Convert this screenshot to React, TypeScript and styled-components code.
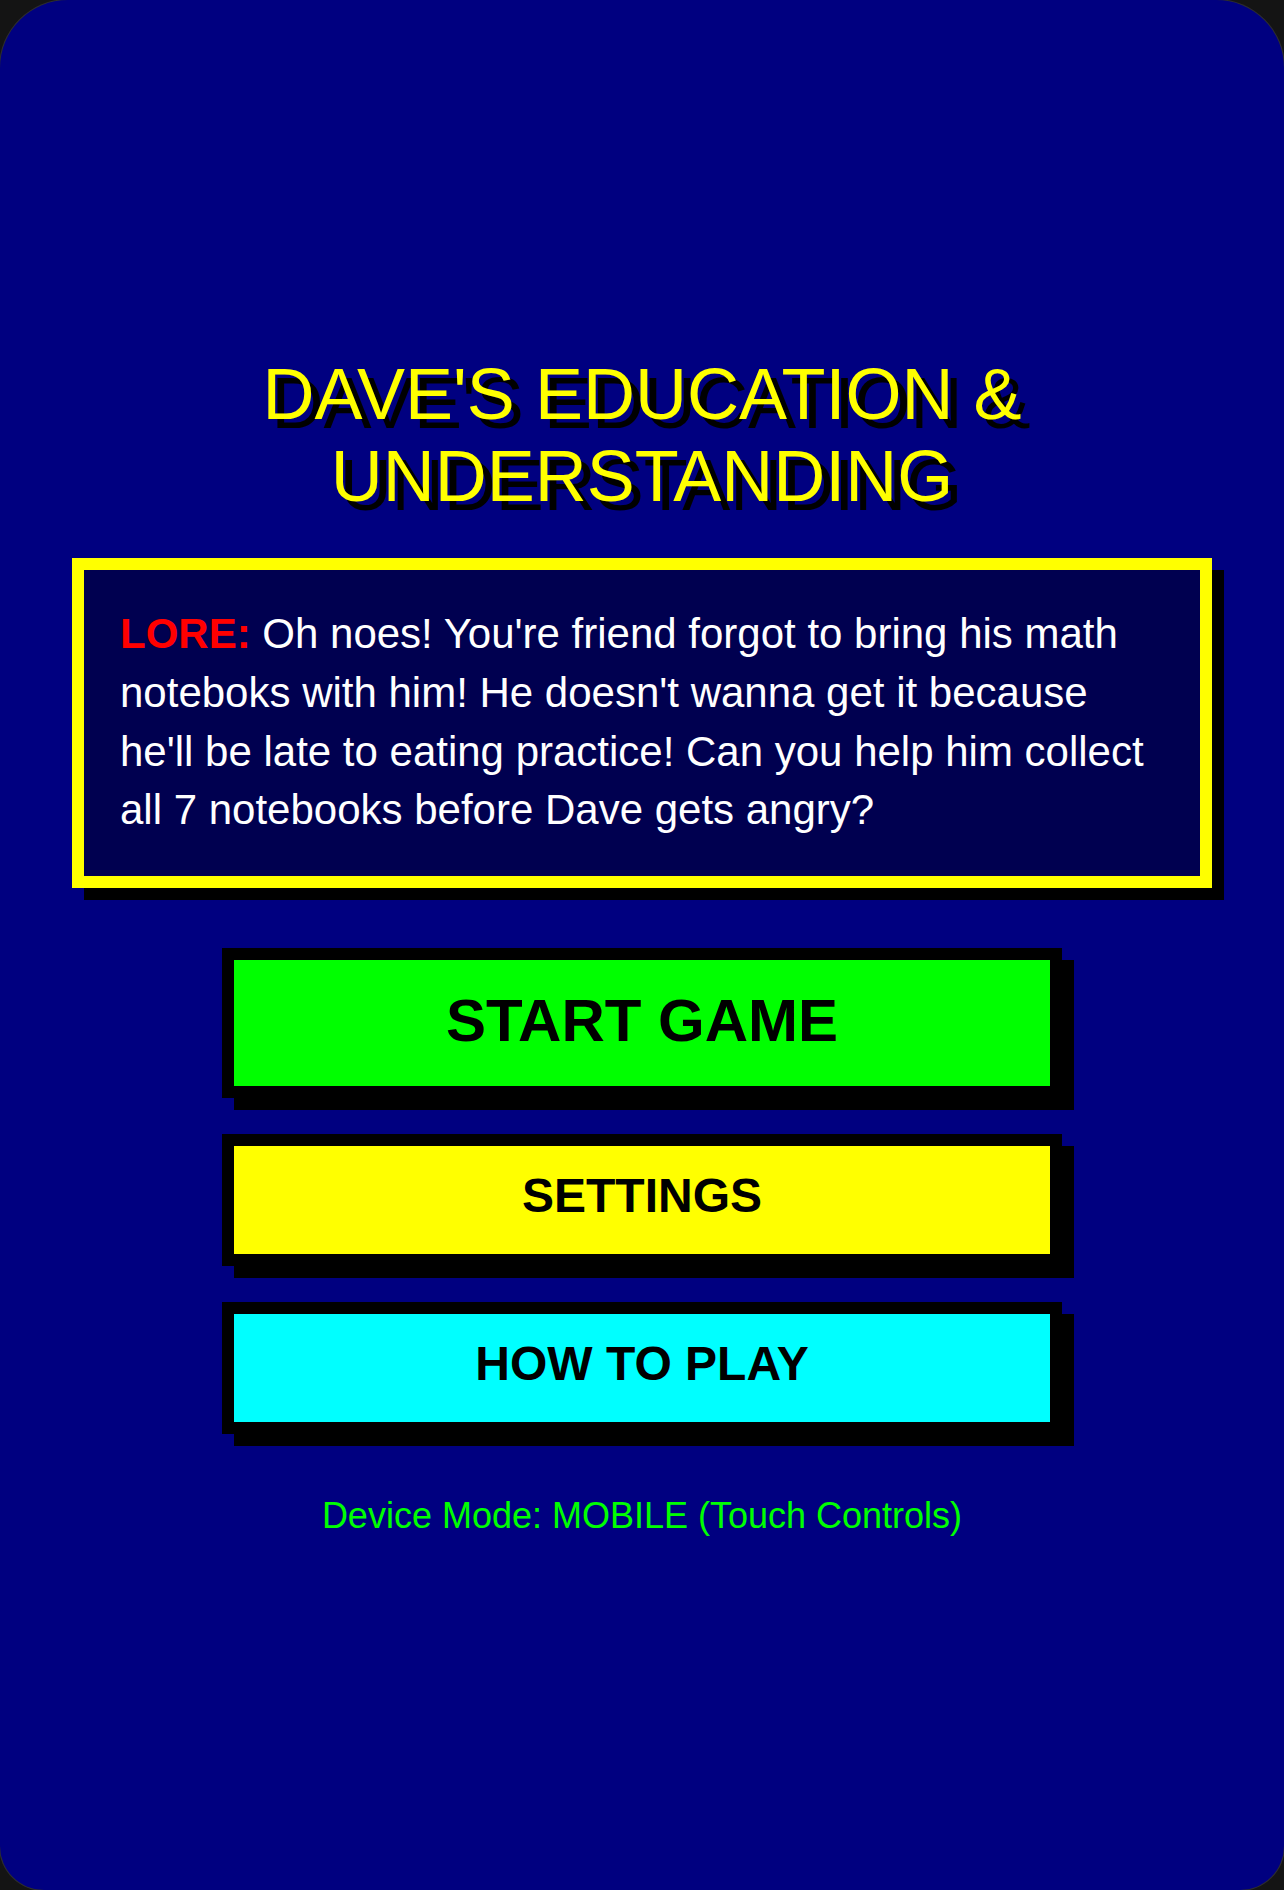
import { FC } from "react";
import styled, { createGlobalStyle } from "styled-components";

const GlobalStyle = createGlobalStyle`
	html, body {
		margin: 0;
		padding: 0;
		background: #141414;
	}

	* {
		box-sizing: border-box;
	}
`;

const Screen = styled("div")`
	display: flex;
	flex-direction: column;
	align-items: center;
	width: 1284px;
	min-height: 100vh;
	padding: 353px 72px 0;
	background: #000080;
	border-radius: 68px 68px 44px 44px;
	box-shadow: 0 0 0 1px #2e2e2e;
	font-family: "Liberation Sans", Arial, sans-serif;
`;

const Title = styled("h1")`
	margin: 0 0 41px;
	width: 100%;
	font-size: 72px;
	font-weight: 400;
	line-height: normal;
	text-align: center;
	color: #ffff00;
	text-shadow: 9px 9px 0 #000;
`;

const LoreBox = styled("div")`
	width: 100%;
	padding: 35px 36px 36px;
	background: #000050;
	border: 12px solid #ffff00;
	box-shadow: 12px 12px 0 #000;
	color: #fff;
	font-size: 42px;
	line-height: 1.4;
`;

const LoreLabel = styled("span")`
	color: #ff0000;
	font-weight: 700;
`;

const ButtonStack = styled("div")`
	display: flex;
	flex-direction: column;
	gap: 36px;
	width: 840px;
	margin-top: 60px;
`;

type ButtonKind = "primary" | "secondary";

const MenuButton = styled("button")<{ $bg: string; $kind: ButtonKind }>`
	display: block;
	width: 100%;
	margin: 0;
	padding: ${({ $kind }) => ($kind === "primary" ? "31px 0 35px" : "26px 0 34px")};
	background: ${({ $bg }) => $bg};
	border: 12px solid #000;
	border-radius: 0;
	box-shadow: 12px 12px 0 #000;
	color: #000;
	font-family: "Liberation Sans", Arial, sans-serif;
	font-size: ${({ $kind }) => ($kind === "primary" ? "60px" : "48px")};
	font-weight: 700;
	line-height: 1;
	text-align: center;
	cursor: pointer;
`;

const DeviceMode = styled("p")`
	margin: 61px 0 0;
	color: #00ff00;
	font-size: 36px;
	line-height: normal;
	text-align: center;
`;

const menu: { label: string; bg: string; kind: ButtonKind }[] = [
	{ label: "START GAME", bg: "#00ff00", kind: "primary" },
	{ label: "SETTINGS", bg: "#ffff00", kind: "secondary" },
	{ label: "HOW TO PLAY", bg: "#00ffff", kind: "secondary" },
];

const App: FC = () => {
	return (
		<>
			<GlobalStyle />
			<Screen>
				<Title>DAVE'S EDUCATION &amp; UNDERSTANDING</Title>
				<LoreBox>
					<LoreLabel>LORE:</LoreLabel> Oh noes! You're friend forgot to
					bring his math noteboks with him! He doesn't wanna get it
					because he'll be late to eating practice! Can you help him
					collect all 7 notebooks before Dave gets angry?
				</LoreBox>
				<ButtonStack>
					{menu.map((item) => (
						<MenuButton key={item.label} $bg={item.bg} $kind={item.kind}>
							{item.label}
						</MenuButton>
					))}
				</ButtonStack>
				<DeviceMode>Device Mode: MOBILE (Touch Controls)</DeviceMode>
			</Screen>
		</>
	);
};

export default App;
